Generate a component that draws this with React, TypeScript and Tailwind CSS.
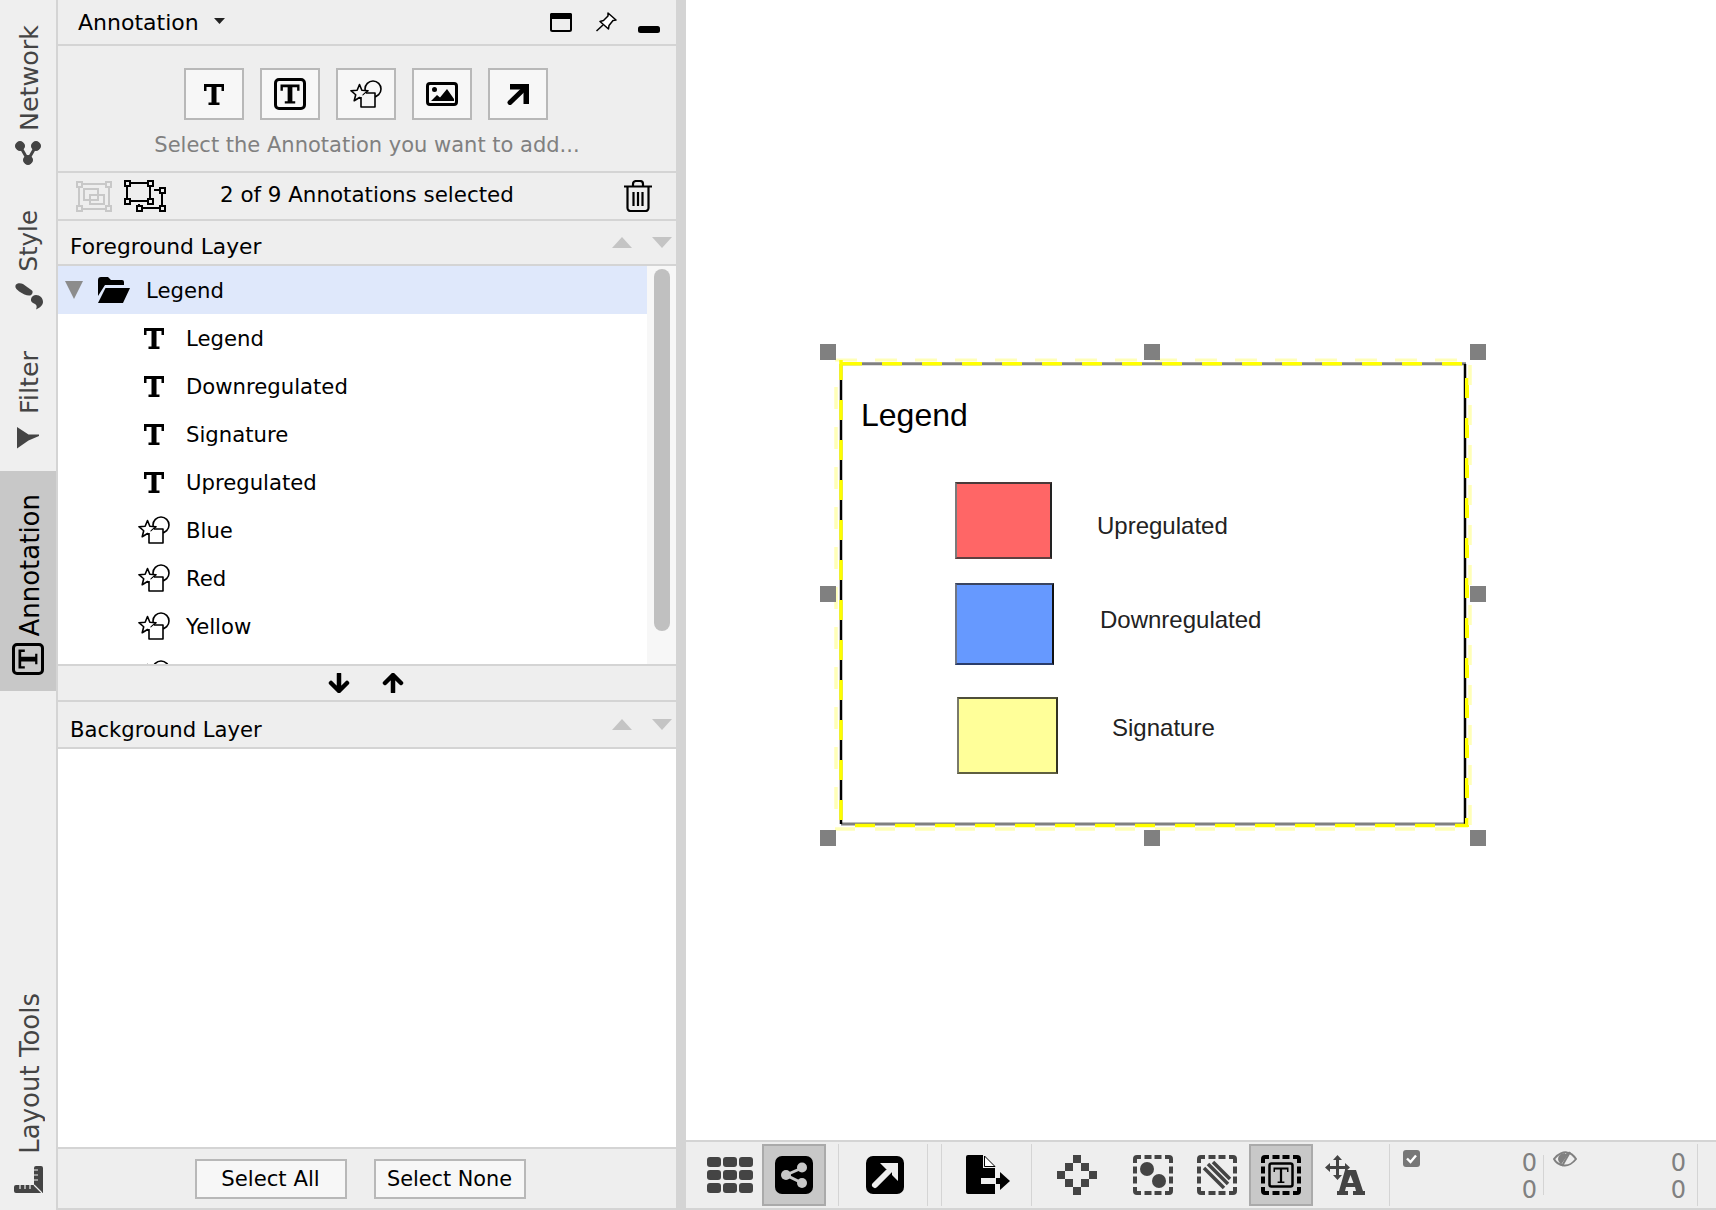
const T_PATH = "M0 0H20V7H17.5V3H12.5V18.5H15.5V21H4.5V18.5H7.5V3H2.5V7H0Z";

function TIcon({ className = "" }: { className?: string }) {
  return (
    <svg width="20" height="21" viewBox="0 0 20 21" className={className}>
      <path d={T_PATH} fill="#000" />
    </svg>
  );
}

function TBoxIcon({ size = 32, color = "#000" }: { size?: number; color?: string }) {
  return (
    <svg width={size} height={size} viewBox="0 0 32 32">
      <rect x="1.5" y="1.5" width="29" height="29" rx="3.5" fill="none" stroke={color} strokeWidth="3" />
      <g transform="translate(6.5 6.5) scale(0.95 0.9)">
        <path d={T_PATH} fill={color} />
      </g>
    </svg>
  );
}

function ShapesIcon({ bg = "#fff" }: { bg?: string }) {
  return (
    <svg width="32" height="28" viewBox="0 0 32 28" fill="none" stroke="#000" strokeWidth="1.6" strokeLinejoin="round">
      <circle cx="23" cy="9" r="8" fill={bg} />
      <path
        d="M9.5 4.5L11.85 10.26L18.06 10.72L13.3 14.74L14.79 20.78L9.5 17.5L4.21 20.78L5.7 14.74L0.94 10.72L7.15 10.26Z"
        fill={bg}
      />
      <path d="M11 17V27H25V13H16" fill={bg} />
    </svg>
  );
}

function ImageIcon() {
  return (
    <svg width="32" height="24" viewBox="0 0 32 24">
      <rect x="1.5" y="1.5" width="29" height="21" rx="2.5" fill="none" stroke="#000" strokeWidth="3" />
      <circle cx="8.5" cy="7.5" r="2.5" fill="#000" />
      <path d="M5 19L11 13L14 15.5L21 7L28 17V19Z" fill="#000" />
    </svg>
  );
}

function ArrowUpRight() {
  return (
    <svg width="22" height="21" viewBox="0 0 22 21">
      <path d="M3 18.5L17 5" stroke="#000" strokeWidth="5" strokeLinecap="round" />
      <path d="M3 0H22V20H16.5V5.5H3Z" fill="#000" />
    </svg>
  );
}

function Triangle({ dir, color, w, h }: { dir: "up" | "down"; color: string; w: number; h: number }) {
  return (
    <svg width={w} height={h} viewBox="0 0 20 11">
      <path d={dir === "up" ? "M10 0L20 11H0Z" : "M0 0H20L10 11Z"} fill={color} />
    </svg>
  );
}

function ArrowStroke({ up }: { up?: boolean }) {
  return (
    <svg width="22" height="20" viewBox="0 0 22 20" className={up ? "rotate-180" : ""}>
      <path d="M11 1V17M3 10L11 18L19 10" fill="none" stroke="#000" strokeWidth="4.5" strokeLinecap="round" strokeLinejoin="round" />
    </svg>
  );
}

function GroupGreyIcon() {
  return (
    <svg width="36" height="31" viewBox="0 0 36 31" fill="none" stroke="#c8c8c8" strokeWidth="2">
      <rect x="3" y="3" width="30" height="25" />
      <rect x="8" y="8" width="14" height="11" />
      <rect x="14" y="14" width="14" height="9" />
      <g fill="#eeeeee">
        <rect x="1" y="1" width="5" height="5" />
        <rect x="30" y="1" width="5" height="5" />
        <rect x="1" y="25" width="5" height="5" />
        <rect x="30" y="25" width="5" height="5" />
      </g>
    </svg>
  );
}

function UngroupIcon() {
  return (
    <svg width="42" height="32" viewBox="0 0 42 32" fill="none" stroke="#000" strokeWidth="2">
      <rect x="3" y="3" width="23" height="18" />
      <path d="M30 10H38V28H15V24" />
      <g fill="#eeeeee">
        <rect x="1" y="1" width="5" height="5" />
        <rect x="24" y="1" width="5" height="5" />
        <rect x="1" y="19" width="5" height="5" />
        <rect x="24" y="19" width="5" height="5" />
        <rect x="36" y="8" width="5" height="5" />
        <rect x="36" y="26" width="5" height="5" />
        <rect x="13" y="26" width="5" height="5" />
      </g>
    </svg>
  );
}

function TrashIcon() {
  return (
    <svg width="28" height="32" viewBox="0 0 28 32" fill="none" stroke="#000" strokeWidth="2.2">
      <path d="M0 6.5H28M9 6V4a3 3 0 0 1 3-3h4a3 3 0 0 1 3 3v2" />
      <path d="M3.5 7V28a3 3 0 0 0 3 3h15a3 3 0 0 0 3-3V7" />
      <path d="M9.5 12V26M14 12V26M18.5 12V26" />
    </svg>
  );
}

function FolderOpen() {
  return (
    <svg width="32" height="26" viewBox="0 0 32 26">
      <path d="M0 3a3 3 0 0 1 3-3H10L13 3H24a2 2 0 0 1 2 2V8H7L0 19Z" fill="#000" />
      <path d="M7.5 11H32L25 26H0Z" fill="#000" />
    </svg>
  );
}

function DashedBox({ color, children }: { color: string; children: React.ReactNode }) {
  return (
    <svg width="40" height="40" viewBox="0 0 40 40">
      <path
        d="M2 8V4a2 2 0 0 1 2-2H8M11.5 2H18.5M21.5 2H28.5M32 2H36a2 2 0 0 1 2 2V8M38 11.5V18.5M38 21.5V28.5M38 32V36a2 2 0 0 1-2 2H32M28.5 38H21.5M18.5 38H11.5M8 38H4a2 2 0 0 1-2-2V32M2 28.5V21.5M2 18.5V11.5"
        fill="none"
        stroke={color}
        strokeWidth="4"
      />
      {children}
    </svg>
  );
}

function ToolCell({ active, className = "", children }: { active?: boolean; className?: string; children: React.ReactNode }) {
  return (
    <div className={`flex h-[62px] w-[64px] shrink-0 items-center justify-center border-2 ${active ? "border-[#aaaaaa] bg-[#c8c8c8]" : "border-transparent"} ${className}`}>
      {children}
    </div>
  );
}

function Sep({ className = "" }: { className?: string }) {
  return <div className={`h-[62px] w-px shrink-0 bg-[#d4d4d4] ${className}`} />;
}

function AddButton({ children }: { children: React.ReactNode }) {
  return (
    <div className="flex h-[52px] w-[60px] items-center justify-center border-2 border-[#b8b8b8] bg-[#f7f7f7]">
      {children}
    </div>
  );
}

function LayerHeader({ title, className = "" }: { title: string; className?: string }) {
  return (
    <div className={`flex shrink-0 items-center border-b-2 border-[#d4d4d4] pl-3 pr-1 ${className}`}>
      <span className="flex-1 pt-[10px]">{title}</span>
      <div className="flex items-center gap-5">
        <Triangle dir="up" color="#c4c4c4" w={20} h={11} />
        <Triangle dir="down" color="#c4c4c4" w={20} h={11} />
      </div>
    </div>
  );
}

function RailLabel({ children, className = "" }: { children: React.ReactNode; className?: string }) {
  return (
    <span className={`ml-[3px] rotate-180 whitespace-nowrap leading-none text-[#444444] [writing-mode:vertical-rl] ${className}`}>
      {children}
    </span>
  );
}

const textRows = ["Legend", "Downregulated", "Signature", "Upregulated"];
const shapeRows = ["Blue", "Red", "Yellow"];

function TreeRow({ label, icon }: { label?: string; icon: React.ReactNode }) {
  return (
    <div className="flex h-12 shrink-0 items-center pl-[80px]">
      <div className="flex w-[32px] justify-center">{icon}</div>
      <span className="ml-[16px] pt-[2px]">{label}</span>
    </div>
  );
}

export default function App() {
  return (
    <div className="flex h-screen w-screen overflow-hidden bg-white font-['DejaVu_Sans',sans-serif] text-[21.2px] text-black">
      {/* side tabs */}
      <div className="flex w-[58px] shrink-0 flex-col items-center border-r-2 border-[#d4d4d4] bg-[#efefef]">
        <div className="mt-[25px] flex flex-col items-center gap-[9px]">
          <RailLabel className="text-[25.4px]">Network</RailLabel>
          <svg width="26" height="26" viewBox="0 0 26 26" fill="#444444" stroke="#444444">
            <circle cx="5" cy="6" r="4.5" />
            <circle cx="21" cy="6" r="4.5" />
            <circle cx="13" cy="20" r="4.5" />
            <path d="M5 6L13 20L21 6" fill="none" strokeWidth="3" />
          </svg>
        </div>
        <div className="mt-[44px] flex flex-col items-center gap-[10px]">
          <RailLabel className="text-[24.5px]">Style</RailLabel>
          <svg width="29" height="28" viewBox="0 0 29 28" fill="#444444">
            <path d="M2 2.5C4 0.5 7 1 9 2L18 8.5C19.5 10 18 13 16 13.5C13 14 9 12 6 10C3 8 0 5 2 2.5Z" />
            <path d="M22 13C26 13 29 16 29 20C29 23 26 26 22 27.5C23 25 23 23 21 22C18 21 16.5 19 17 17C17.5 14.5 20 13 22 13Z" />
          </svg>
        </div>
        <div className="mt-[41px] flex flex-col items-center gap-[14px]">
          <RailLabel className="text-[25.4px]">Filter</RailLabel>
          <svg width="22" height="22" viewBox="0 0 22 22" fill="#444444">
            <path d="M0 0L11.5 7.5H22V9L11.5 13.5L0 21.5Z" />
          </svg>
        </div>
        <div className="mt-[22px] flex h-[220px] w-full flex-col items-center gap-[6px] bg-[#c8c8c8] pt-[23px]">
          <RailLabel className="text-[26px] text-black">Annotation</RailLabel>
          <div className="-rotate-90">
            <TBoxIcon size={32} />
          </div>
        </div>
        <div className="mb-[17px] mt-auto flex flex-col items-center gap-[12px]">
          <RailLabel className="text-[26px]">Layout Tools</RailLabel>
          <svg width="29" height="27" viewBox="0 0 29 27">
            <path d="M20 2a2 2 0 0 1 2-2H27a2 2 0 0 1 2 2V27H2a2 2 0 0 1-2-2V21a2 2 0 0 1 2-2H20Z" fill="#444444" />
            <path d="M20 4H24M20 9H24M20 14H24M6 19V23M11 19V23M16 19V23" stroke="#efefef" strokeWidth="1.2" />
            <path d="M20 19L28 27" stroke="#efefef" strokeWidth="1.2" />
          </svg>
        </div>
      </div>

      {/* annotation panel */}
      <div className="flex w-[618px] shrink-0 flex-col bg-[#eeeeee]">
        <div className="flex h-[46px] shrink-0 items-center border-b-2 border-[#d4d4d4] pl-[20px] pr-[16px]">
          <span className="text-[22px]">Annotation</span>
          <svg width="11" height="6" viewBox="0 0 11 6" className="mb-[2px] ml-[15px]">
            <path d="M0 0H11L5.5 6Z" fill="#222222" />
          </svg>
          <div className="ml-auto flex items-center">
            <svg width="22" height="19" viewBox="0 0 22 19">
              <rect x="1" y="1" width="20" height="17" rx="1.5" fill="none" stroke="#000" strokeWidth="2" />
              <rect x="0" y="0" width="22" height="6" rx="1.5" fill="#000" />
            </svg>
            <svg width="22" height="20" viewBox="0 0 22 20" fill="none" stroke="#000" strokeWidth="1.5" strokeLinejoin="round" className="ml-[23px]">
              <path d="M13 1L21 8L18 8.5L14 13.5L13.5 17L5 9.5L8.5 8.5L13 4Z" fill="#fff" />
              <path d="M8 13L1.5 19" />
            </svg>
            <svg width="22" height="7" viewBox="0 0 22 7" className="ml-[21px] mt-[14px]">
              <rect width="22" height="7" rx="2.5" fill="#000" />
            </svg>
          </div>
        </div>

        <div className="flex h-[127px] shrink-0 flex-col items-center border-b-2 border-[#d4d4d4] pt-[22px]">
          <div className="flex gap-4 pr-[2px]">
            <AddButton>
              <TIcon />
            </AddButton>
            <AddButton>
              <TBoxIcon />
            </AddButton>
            <AddButton>
              <ShapesIcon bg="#f7f7f7" />
            </AddButton>
            <AddButton>
              <ImageIcon />
            </AddButton>
            <AddButton>
              <ArrowUpRight />
            </AddButton>
          </div>
          <span className="mt-[10px] text-[21px] text-[#808080]">Select the Annotation you want to add...</span>
        </div>

        <div className="flex h-[48px] shrink-0 items-center border-b-2 border-[#d4d4d4] pl-[18px] pr-[24px]">
          <GroupGreyIcon />
          <div className="ml-[12px]">
            <UngroupIcon />
          </div>
          <span className="mb-[2px] ml-[54px] mr-auto text-[21.4px]">2 of 9 Annotations selected</span>
          <TrashIcon />
        </div>

        <LayerHeader title="Foreground Layer" className="h-[45px] text-[21.75px]" />

        <div className="relative flex h-[398px] shrink-0 overflow-hidden bg-white">
          <div className="flex min-w-0 flex-1 flex-col">
            <div className="flex h-12 shrink-0 items-center bg-[#dfe8fb]">
              <svg width="18" height="18" viewBox="0 0 18 18" className="ml-[7px]">
                <path d="M0 0H18L9 18Z" fill="#8c8c8c" />
              </svg>
              <div className="ml-[15px]">
                <FolderOpen />
              </div>
              <span className="ml-[16px] pt-[2px]">Legend</span>
            </div>
            {textRows.map((label) => (
              <TreeRow key={label} label={label} icon={<TIcon />} />
            ))}
            {shapeRows.map((label) => (
              <TreeRow key={label} label={label} icon={<ShapesIcon />} />
            ))}
            <TreeRow icon={<ShapesIcon />} />
          </div>
          <div className="w-[29px] shrink-0 bg-[#f7f7f7] pl-[7px] pt-[3px]">
            <div className="h-[362px] w-[16px] rounded-lg bg-[#c0c0c0]" />
          </div>
        </div>

        <div className="flex h-[38px] shrink-0 items-center justify-center gap-[32px] border-y-2 border-[#d4d4d4] pr-[2px]">
          <ArrowStroke />
          <ArrowStroke up />
        </div>

        <LayerHeader title="Background Layer" className="h-[47px] text-[21.15px]" />

        <div className="min-h-0 flex-1 bg-white" />

        <div className="flex h-[63px] shrink-0 items-center justify-center gap-[27px] border-y-2 border-[#d4d4d4] pr-[14px]">
          <div className="flex h-[40px] w-[152px] items-center justify-center border-2 border-[#b8b8b8] bg-[#f7f7f7]">Select All</div>
          <div className="flex h-[40px] w-[152px] items-center justify-center border-2 border-[#b8b8b8] bg-[#f7f7f7] pt-[2px] text-[20.8px]">Select None</div>
        </div>
      </div>

      {/* splitter */}
      <div className="w-[10px] shrink-0 bg-[#d4d4d4]" />

      {/* canvas and toolbar */}
      <div className="flex min-w-0 flex-1 flex-col">
        <div className="relative min-h-0 flex-1 bg-white font-['Liberation_Sans',sans-serif]">
          <div className="absolute left-[175px] top-[399px] text-[32px] leading-none">Legend</div>

          <div className="absolute left-[269px] top-[482px] h-[77px] w-[97px] border-2 border-b-[#5f3f3f] border-l-[#7a7a7a] border-r-[#222222] border-t-[#4a3a3a] bg-[#ff6666]" />
          <div className="absolute left-[269px] top-[583px] h-[82px] w-[99px] border-2 border-b-[#2a3d6b] border-l-[#6f7686] border-r-[#111111] border-t-[#3a4560] bg-[#6699ff]" />
          <div className="absolute left-[271px] top-[697px] h-[77px] w-[101px] border-2 border-b-[#5f5f40] border-l-[#7a7a6a] border-r-[#333322] border-t-[#4f4f3a] bg-[#ffff99]" />

          <div className="absolute left-[411px] top-[514px] text-[24px] leading-none text-[#222222]">Upregulated</div>
          <div className="absolute left-[414px] top-[608px] text-[24px] leading-none text-[#222222]">Downregulated</div>
          <div className="absolute left-[426px] top-[716px] text-[24px] leading-none text-[#222222]">Signature</div>

          {/* selection outline, drawn in page coordinates minus the canvas offset */}
          <svg className="absolute left-0 top-0" width="1030" height="1140" viewBox="686 0 1030 1140" fill="none">
            <path d="M841 363.7H1466" stroke="#808080" strokeWidth="3" />
            <path d="M841 824H1466" stroke="#808080" strokeWidth="3" />
            <path d="M841 364V824" stroke="#000" strokeWidth="2.5" />
            <path d="M1465 364V824" stroke="#000" strokeWidth="2.5" />

            <path d="M842 363.7H1466" stroke="#ffff00" strokeWidth="3.5" strokeDasharray="20 20" />
            <path d="M835 360H1466" stroke="#ffffb8" strokeWidth="3" strokeDasharray="22 18" />
            <path d="M841 360V824" stroke="#ffff00" strokeWidth="3.5" strokeDasharray="20 20" />
            <path d="M836 387V824" stroke="#ffffb8" strokeWidth="3.5" strokeDasharray="22 18" />

            <path d="M855 825.5H1468" stroke="#ffff00" strokeWidth="3.5" strokeDasharray="20 20" />
            <path d="M835 829H1468" stroke="#ffffb8" strokeWidth="3.5" strokeDasharray="20 20" />
            <path d="M1467 378V827" stroke="#ffff00" strokeWidth="4" strokeDasharray="20 20" />
            <path d="M1470 365V828" stroke="#ffffb8" strokeWidth="3.5" strokeDasharray="20 20" />
          </svg>

          {/* handles */}
          <div className="absolute left-[134px] top-[344px] size-4 bg-[#808080]" />
          <div className="absolute left-[458px] top-[344px] size-4 bg-[#808080]" />
          <div className="absolute left-[784px] top-[344px] size-4 bg-[#808080]" />
          <div className="absolute left-[134px] top-[586px] size-4 bg-[#808080]" />
          <div className="absolute left-[784px] top-[586px] size-4 bg-[#808080]" />
          <div className="absolute left-[134px] top-[830px] size-4 bg-[#808080]" />
          <div className="absolute left-[458px] top-[830px] size-4 bg-[#808080]" />
          <div className="absolute left-[784px] top-[830px] size-4 bg-[#808080]" />
        </div>

        <div className="flex h-[70px] shrink-0 items-center border-y-2 border-[#d4d4d4] bg-[#eeeeee] pl-[12px]">
          <ToolCell>
            <svg width="46" height="36" viewBox="0 0 46 36" fill="#444444">
              {[0, 16, 32].map((x) =>
                [0, 13, 26].map((y) => <rect key={`${x}-${y}`} x={x} y={y} width="14" height="10" rx="3" />),
              )}
            </svg>
          </ToolCell>
          <ToolCell active>
            <svg width="38" height="38" viewBox="0 0 38 38">
              <rect width="38" height="38" rx="7" fill="#000" />
              <path d="M27 12L11 19L27 27" fill="none" stroke="#c8c8c8" strokeWidth="3" />
              <circle cx="27" cy="11.5" r="5" fill="#c8c8c8" />
              <circle cx="11" cy="19" r="5" fill="#c8c8c8" />
              <circle cx="27" cy="27" r="5" fill="#c8c8c8" />
            </svg>
          </ToolCell>
          <Sep className="ml-[12px]" />
          <ToolCell className="ml-[14px]">
            <svg width="38" height="38" viewBox="0 0 38 38">
              <rect width="38" height="38" rx="7" fill="#000" />
              <path d="M9 29L26 12" stroke="#eeeeee" strokeWidth="6" strokeLinecap="round" />
              <path d="M14 7H32V25L26 19V13H20Z" fill="#eeeeee" />
            </svg>
          </ToolCell>
          <Sep className="ml-[10px]" />
          <Sep className="ml-[13px]" />
          <ToolCell className="ml-[14px]">
            <svg width="44" height="40" viewBox="0 0 44 40">
              <path d="M2 0H17V13H29V39H2a2 2 0 0 1-2-2V2a2 2 0 0 1 2-2Z" fill="#000" />
              <path d="M18.5 1V11.5H29Z" fill="#fff" stroke="#000" strokeWidth="1" />
              <rect x="15" y="23" width="15" height="6" fill="#eeeeee" />
              <rect x="30" y="23" width="5" height="6" fill="#000" />
              <path d="M34 17L44 26L34 35Z" fill="#000" />
            </svg>
          </ToolCell>
          <Sep className="ml-[11px]" />
          <ToolCell className="ml-[13px]">
            <svg width="40" height="40" viewBox="0 0 40 40" fill="#444444">
              <rect x="16" y="0" width="8" height="8" />
              <rect x="8" y="8" width="8" height="8" />
              <rect x="24" y="8" width="8" height="8" />
              <rect x="0" y="16" width="8" height="8" />
              <rect x="32" y="16" width="8" height="8" />
              <rect x="8" y="24" width="8" height="8" />
              <rect x="24" y="24" width="8" height="8" />
              <rect x="16" y="32" width="8" height="8" />
            </svg>
          </ToolCell>
          <ToolCell className="ml-[12px]">
            <DashedBox color="#444444">
              <circle cx="14" cy="14" r="7" fill="#444444" />
              <circle cx="26" cy="26" r="7" fill="#444444" />
            </DashedBox>
          </ToolCell>
          <ToolCell>
            <DashedBox color="#444444">
              <path d="M7 13L27 33M11 9L31 29M16 7L33 24" stroke="#444444" strokeWidth="3.5" />
            </DashedBox>
          </ToolCell>
          <ToolCell active>
            <DashedBox color="#000">
              <rect x="8.5" y="8.5" width="23" height="23" rx="2" fill="none" stroke="#000" strokeWidth="2.5" />
              <g transform="translate(12.5 12.5) scale(0.75)">
                <path d="M0 0H20V6H18V2.5H11.5V18.5H14.5V20.5H5.5V18.5H8.5V2.5H2V6H0Z" fill="#000" />
              </g>
            </DashedBox>
          </ToolCell>
          <ToolCell>
            <svg width="40" height="40" viewBox="0 0 40 40" fill="#444444">
              <path d="M12.5 0L17 5H14V11H20V8L25 12.5L20 17V14H14V20H17L12.5 25L8 20H11V14H5V17L0 12.5L5 8V11H11V5H8Z" />
              <path
                fillRule="evenodd"
                d="M20 15H31L38 36H40V40H28V36H31L30 32H21L20 36H23V40H12V36H14ZM25.5 20L22.5 28H28.5Z"
              />
            </svg>
          </ToolCell>
          <Sep className="ml-[12px]" />

          <div className="flex h-[62px] w-[147px] shrink-0 items-start pl-[13px] pt-[6px] text-[24px] leading-[27px] text-[#808080]">
            <svg width="17" height="17" viewBox="0 0 17 17">
              <rect width="17" height="17" rx="3" fill="#777777" />
              <path d="M4 8.5L7.5 12L13 5.5" fill="none" stroke="#fff" strokeWidth="2.4" />
            </svg>
            <div className="ml-auto flex flex-col items-end">
              <span>0</span>
              <span>0</span>
            </div>
          </div>
          <div className="ml-[6px] mr-[9px] h-[40px] w-px shrink-0 bg-[#d4d4d4]" />
          <div className="flex h-[62px] w-[133px] shrink-0 items-start pt-[6px] text-[24px] leading-[27px] text-[#808080]">
            <svg width="24" height="16" viewBox="0 0 24 16" fill="none" stroke="#808080" strokeWidth="2" className="mt-[1px]">
              <path d="M1 8C5 2 11 1 14 1.5C18 2 21 5 23 8C20 12 15 15 11 14.5C7 14 3 12 1 8Z" />
              <path d="M12 3C9 3 6 5 6 8C6 10 7 11 8 12L15 2" fill="#808080" />
              <path d="M17 1L9 15" strokeWidth="2" />
            </svg>
            <div className="ml-auto flex flex-col items-end">
              <span>0</span>
              <span>0</span>
            </div>
          </div>
          <Sep className="ml-[11px]" />
        </div>
      </div>
    </div>
  );
}
